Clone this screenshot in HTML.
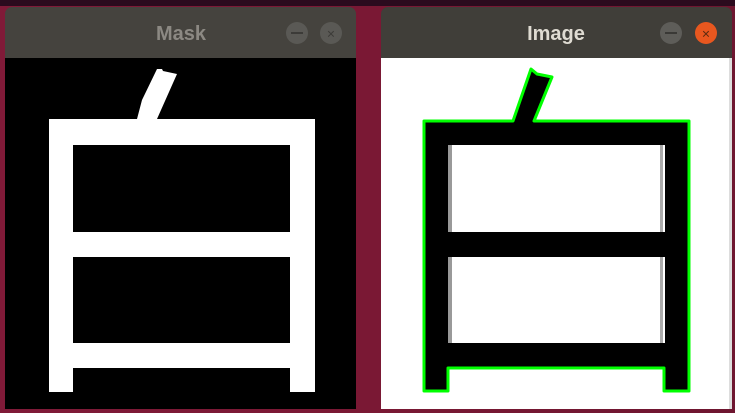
<!DOCTYPE html>
<html><head><meta charset="utf-8"><style>
html,body{margin:0;padding:0;width:735px;height:413px;overflow:hidden;background:#7d1936;}
svg{display:block}
</style></head><body>
<svg width="735" height="413" viewBox="0 0 735 413" xmlns="http://www.w3.org/2000/svg">
<defs>
<linearGradient id="bg" x1="0" y1="0" x2="1" y2="0"><stop offset="0" stop-color="#801a38"/><stop offset="0.5" stop-color="#7a1834"/><stop offset="1" stop-color="#6e1630"/></linearGradient>
</defs>
<rect width="735" height="413" fill="url(#bg)"/>
<rect width="735" height="6" fill="#2b0b1e"/>
<rect x="5" y="7" width="351" height="60" rx="7" fill="#45433e"/>
<rect x="5" y="58" width="351" height="351" fill="#000"/>
<text x="181" y="40" text-anchor="middle" font-family="Liberation Sans, sans-serif" font-weight="bold" font-size="20" fill="#8c8983">Mask</text>
<circle cx="297" cy="33" r="11" fill="#5a5955"/>
<rect x="291" y="32" width="12" height="2" fill="#3c3b38"/>
<circle cx="331" cy="33" r="11" fill="#5a5955"/>
<text x="331" y="38.5" text-anchor="middle" font-family="Liberation Sans, sans-serif" font-size="14" fill="#3c3b38">×</text>
<path fill="#fff" fill-rule="evenodd" d="M49 119H315V392H290V368H73V392H49Z M73 145V232H290V145Z M73 257V343H290V257Z"/>
<polygon fill="#fff" points="157,69 162,69 163,71 177,74 157,119 137,119 142,100"/>
<rect x="381" y="7" width="351" height="60" rx="7" fill="#403e39"/>
<rect x="381" y="58" width="351" height="351" fill="#fff"/>
<rect x="729" y="58" width="3" height="351" fill="#ddd"/>
<text x="556" y="40" text-anchor="middle" font-family="Liberation Sans, sans-serif" font-weight="bold" font-size="20" fill="#dfdbd2">Image</text>
<circle cx="671" cy="33" r="11" fill="#5e5d59"/>
<rect x="665" y="32" width="12" height="2" fill="#3a3936"/>
<circle cx="706" cy="33" r="11" fill="#e8571f"/>
<text x="706" y="38.5" text-anchor="middle" font-family="Liberation Sans, sans-serif" font-size="14" fill="#5a2a10">×</text>
<path fill="#000" stroke="#00ff00" stroke-width="3" stroke-linejoin="round" d="M424 121H513L531 69L537 74L552 77L534 121H689V391H664V368H448V391H424Z"/>
<rect x="448" y="145" width="217" height="87" fill="#fff"/>
<rect x="448" y="257" width="217" height="86" fill="#fff"/>
<rect x="448" y="145" width="4" height="87" fill="#999"/>
<rect x="448" y="257" width="4" height="86" fill="#999"/>
<rect x="660" y="145" width="3" height="87" fill="#aaa"/>
<rect x="660" y="257" width="3" height="86" fill="#aaa"/>
</svg>
</body></html>
